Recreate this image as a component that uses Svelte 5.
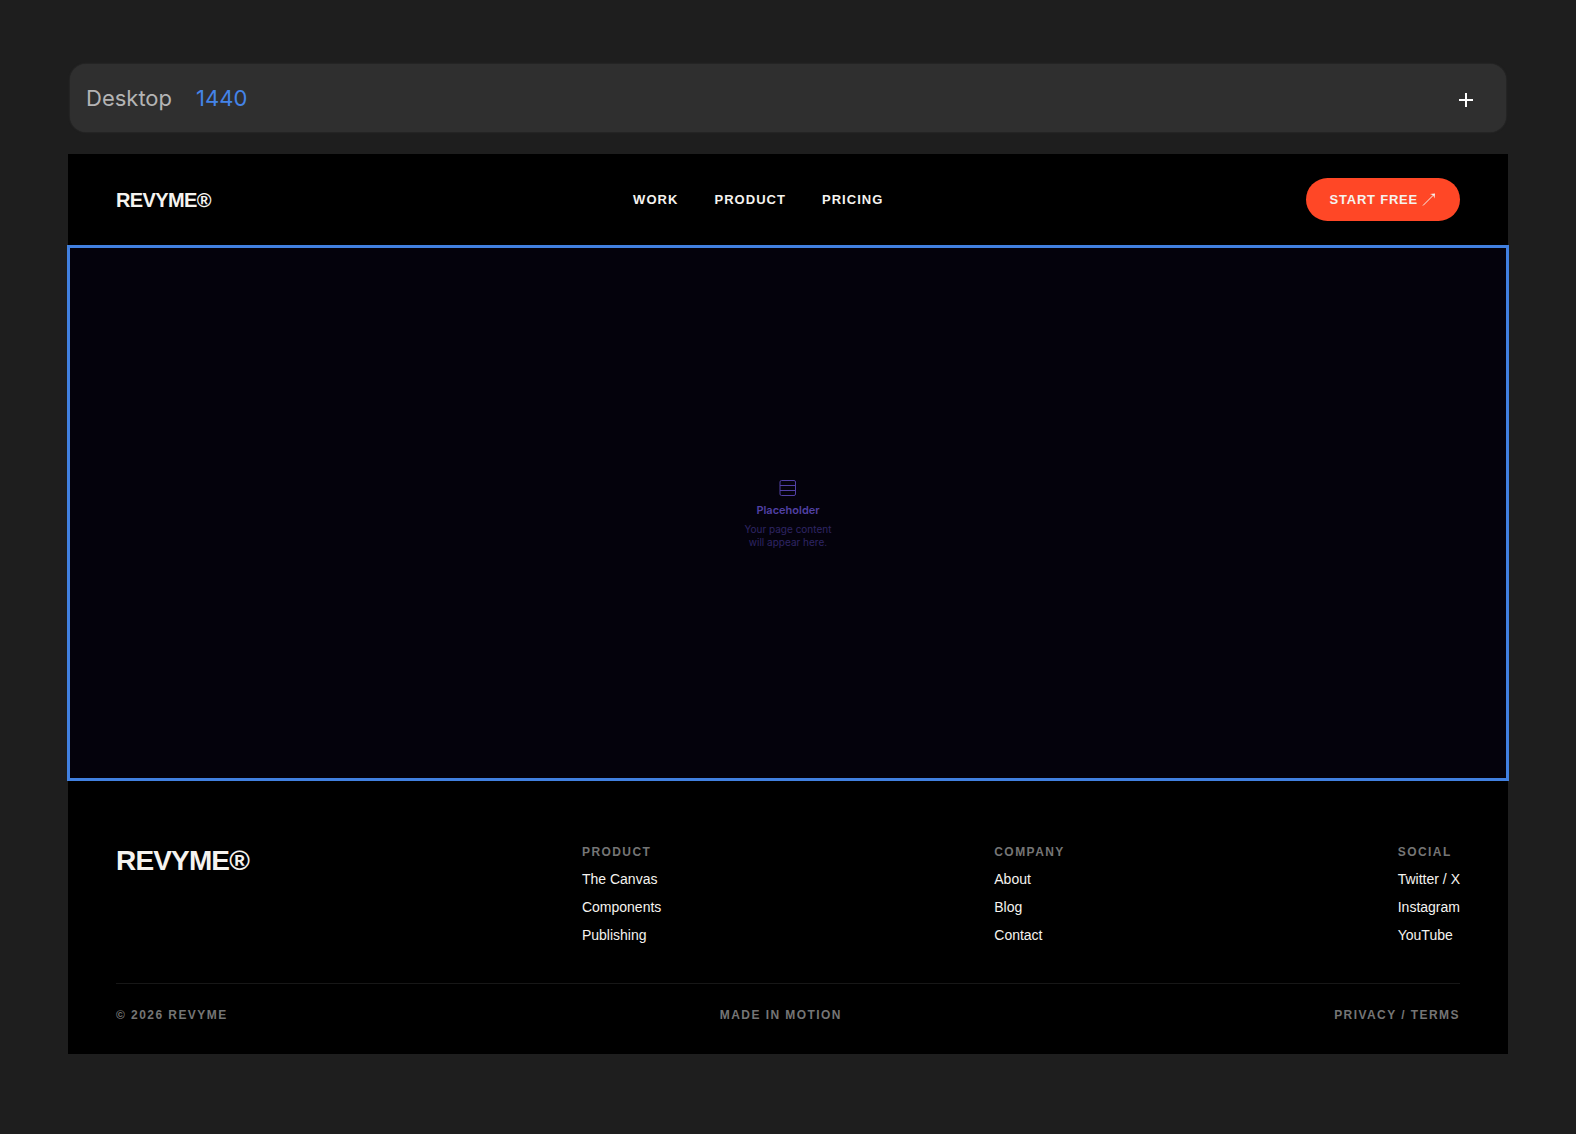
<script>
  const navLinks = ['Work', 'Product', 'Pricing']

  const columns = [
    { title: 'Product', links: ['The Canvas', 'Components', 'Publishing'] },
    { title: 'Company', links: ['About', 'Blog', 'Contact'] },
    { title: 'Social', links: ['Twitter / X', 'Instagram', 'YouTube'] }
  ]

  let { breakpoint = 'Desktop', width = 1440 } = $props()
</script>

<main class="canvas">
  <div class="breakpoint-bar">
    <span class="breakpoint-name">{breakpoint}</span>
    <span class="breakpoint-width">{width}</span>
    <button class="add" aria-label="Add breakpoint">
      <svg width="16" height="16" viewBox="0 0 16 16" aria-hidden="true">
        <path d="M8 1v14M1 8h14" stroke="currentColor" stroke-width="2" />
      </svg>
    </button>
  </div>

  <div class="artboard">
    <header class="header">
      <a class="logo" href="#home">REVYME®</a>
      <nav class="nav">
        {#each navLinks as link}
          <a href="#{link.toLowerCase()}">{link}</a>
        {/each}
      </nav>
      <button class="cta">
        Start free
        <svg width="14" height="14" viewBox="0 0 14 14" fill="none" aria-hidden="true">
          <path d="M1 12.5 12 1.5" stroke="currentColor" />
          <path d="M8 1 13 .5 12.500 5.500 11.300 2.200Z" fill="currentColor" />
        </svg>
      </button>
    </header>

    <section class="placeholder selected">
      <svg width="18" height="18" viewBox="0 0 18 18" fill="none" stroke="currentColor" aria-hidden="true">
        <rect x="1" y="1.5" width="15.5" height="15" rx="1.5" />
        <path d="M1 6.5h15.500M1 11.500h15.500" />
      </svg>
      <h2>Placeholder</h2>
      <p>Your page content<br />will appear here.</p>
    </section>

    <footer class="footer">
      <div class="columns">
        <a class="logo large" href="#home">REVYME®</a>
        {#each columns as column}
          <div class="column">
            <h3 class="label">{column.title}</h3>
            {#each column.links as link}
              <a href="#{link}">{link}</a>
            {/each}
          </div>
        {/each}
      </div>
      <div class="legal label">
        <span>© 2026 Revyme</span>
        <span>Made in motion</span>
        <a href="#legal">Privacy / Terms</a>
      </div>
    </footer>
  </div>
</main>

<style>
  :global(body) {
    margin: 0;
    background: #1e1e1e;
  }

  .canvas {
    padding: 64px 68px 80px;
    font-family: 'Liberation Sans', Arial, sans-serif;
    color: #f5f3ef;
  }

  a {
    color: inherit;
    text-decoration: none;
  }

  button {
    border: 0;
    font: inherit;
    color: inherit;
    cursor: pointer;
  }

  .breakpoint-bar {
    display: flex;
    align-items: center;
    gap: 24px;
    height: 68px;
    margin: 0 2px 22px;
    padding: 0 32px 0 16px;
    box-sizing: border-box;
    border-radius: 16px;
    background: #2f2f2f;
    box-shadow: 0 0 2px #383838;
    font: 22px/28px Inter, sans-serif;
  }

  .breakpoint-name {
    color: #b4b4b4;
  }

  .breakpoint-width {
    color: #4484e8;
  }

  .add {
    display: flex;
    margin-left: auto;
    padding: 4px 0 0;
    background: none;
    color: #fff;
  }

  .artboard {
    background: #000;
  }

  .header {
    display: flex;
    align-items: center;
    justify-content: space-between;
    padding: 24px 48px 25px;
  }

  .logo {
    font-size: 20px;
    font-weight: 700;
    line-height: 24px;
    letter-spacing: -0.03em;
  }

  .logo.large {
    font-size: 28px;
    line-height: 32px;
  }

  .nav {
    display: flex;
    gap: 36px;
    font-size: 13px;
    font-weight: 700;
    line-height: 15px;
    letter-spacing: 0.08em;
    text-transform: uppercase;
  }

  .cta {
    display: flex;
    align-items: center;
    gap: 4px;
    padding: 14px 24px;
    border-radius: 22px;
    background: #ff4726;
    font-size: 13px;
    font-weight: 700;
    line-height: 15px;
    letter-spacing: 0.06em;
    text-transform: uppercase;
  }

  .placeholder {
    display: flex;
    flex-direction: column;
    align-items: center;
    justify-content: center;
    height: 534px;
    padding-top: 2px;
    box-sizing: border-box;
    background: #04020c;
    color: #5140a4;
    font-family: Inter, sans-serif;
    text-align: center;
  }

  .selected {
    outline: 3px solid #4180e0;
    outline-offset: -2px;
  }

  h2 {
    margin: 6px 0;
    font-size: 11px;
    font-weight: 600;
    line-height: 14px;
  }

  p {
    margin: 0;
    font-size: 10px;
    line-height: 13px;
    color: #2f2564;
  }

  .footer {
    padding: 65px 48px 32px;
  }

  .columns {
    display: flex;
    justify-content: space-between;
    padding-bottom: 40px;
    border-bottom: 1px solid #171717;
  }

  .column {
    display: flex;
    flex-direction: column;
    gap: 12px;
    font-size: 14px;
    line-height: 16px;
  }

  .label {
    margin: 0;
    font-size: 12px;
    font-weight: 700;
    line-height: 14px;
    letter-spacing: 0.12em;
    text-transform: uppercase;
    color: #757575;
  }

  .legal {
    display: flex;
    justify-content: space-between;
    padding-top: 24px;
  }
</style>
